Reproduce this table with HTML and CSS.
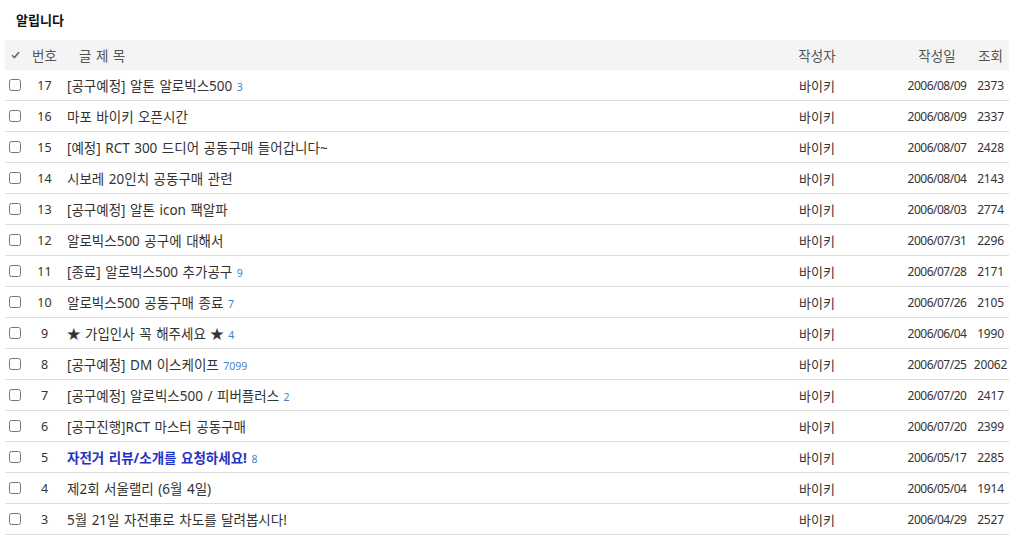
FILE: index.html
```html
<!DOCTYPE html>
<html lang="ko">
<head>
<meta charset="utf-8">
<title>알립니다</title>
<link rel="stylesheet" href="styles.css">
</head>
<body>
<div class="board">
  <h2 class="board-title">알립니다</h2>
  <table class="list">
    <colgroup>
      <col class="c-check"><col class="c-num"><col class="c-subject"><col class="c-author"><col class="c-date"><col class="c-hit">
    </colgroup>
    <thead>
      <tr>
        <th class="check"><svg class="tick" width="9" height="8" viewBox="0 0 9 8"><polyline points="1,4.2 3.4,6.6 8,1.2" fill="none" stroke="#666" stroke-width="1.6"/></svg></th>
        <th class="num">번호</th>
        <th class="subject"><span class="subject-head">글 제 목</span></th>
        <th class="author">작성자</th>
        <th class="date">작성일</th>
        <th class="hit">조회</th>
      </tr>
    </thead>
    <tbody>
      <tr><td class="check"><input type="checkbox"></td><td class="num">17</td><td class="subject">[공구예정] 알톤 알로빅스500 <span class="cmt">3</span></td><td class="author">바이키</td><td class="date">2006/08/09</td><td class="hit">2373</td></tr>
      <tr><td class="check"><input type="checkbox"></td><td class="num">16</td><td class="subject">마포 바이키 오픈시간</td><td class="author">바이키</td><td class="date">2006/08/09</td><td class="hit">2337</td></tr>
      <tr><td class="check"><input type="checkbox"></td><td class="num">15</td><td class="subject">[예정] RCT 300 드디어 공동구매 들어갑니다~</td><td class="author">바이키</td><td class="date">2006/08/07</td><td class="hit">2428</td></tr>
      <tr><td class="check"><input type="checkbox"></td><td class="num">14</td><td class="subject">시보레 20인치 공동구매 관련</td><td class="author">바이키</td><td class="date">2006/08/04</td><td class="hit">2143</td></tr>
      <tr><td class="check"><input type="checkbox"></td><td class="num">13</td><td class="subject">[공구예정] 알톤 icon 팩알파</td><td class="author">바이키</td><td class="date">2006/08/03</td><td class="hit">2774</td></tr>
      <tr><td class="check"><input type="checkbox"></td><td class="num">12</td><td class="subject">알로빅스500 공구에 대해서</td><td class="author">바이키</td><td class="date">2006/07/31</td><td class="hit">2296</td></tr>
      <tr><td class="check"><input type="checkbox"></td><td class="num">11</td><td class="subject">[종료] 알로빅스500 추가공구 <span class="cmt">9</span></td><td class="author">바이키</td><td class="date">2006/07/28</td><td class="hit">2171</td></tr>
      <tr><td class="check"><input type="checkbox"></td><td class="num">10</td><td class="subject">알로빅스500 공동구매 종료 <span class="cmt">7</span></td><td class="author">바이키</td><td class="date">2006/07/26</td><td class="hit">2105</td></tr>
      <tr><td class="check"><input type="checkbox"></td><td class="num">9</td><td class="subject">★ 가입인사 꼭 해주세요 ★ <span class="cmt">4</span></td><td class="author">바이키</td><td class="date">2006/06/04</td><td class="hit">1990</td></tr>
      <tr><td class="check"><input type="checkbox"></td><td class="num">8</td><td class="subject">[공구예정] DM 이스케이프 <span class="cmt">7099</span></td><td class="author">바이키</td><td class="date">2006/07/25</td><td class="hit">20062</td></tr>
      <tr><td class="check"><input type="checkbox"></td><td class="num">7</td><td class="subject">[공구예정] 알로빅스500 / 피버플러스 <span class="cmt">2</span></td><td class="author">바이키</td><td class="date">2006/07/20</td><td class="hit">2417</td></tr>
      <tr><td class="check"><input type="checkbox"></td><td class="num">6</td><td class="subject">[공구진행]RCT 마스터 공동구매</td><td class="author">바이키</td><td class="date">2006/07/20</td><td class="hit">2399</td></tr>
      <tr><td class="check"><input type="checkbox"></td><td class="num">5</td><td class="subject"><span class="strong">자전거 리뷰/소개를 요청하세요!</span> <span class="cmt">8</span></td><td class="author">바이키</td><td class="date">2006/05/17</td><td class="hit">2285</td></tr>
      <tr><td class="check"><input type="checkbox"></td><td class="num">4</td><td class="subject">제2회 서울랠리 (6월 4일)</td><td class="author">바이키</td><td class="date">2006/05/04</td><td class="hit">1914</td></tr>
      <tr><td class="check"><input type="checkbox"></td><td class="num">3</td><td class="subject">5월 21일 자전車로 차도를 달려봅시다!</td><td class="author">바이키</td><td class="date">2006/04/29</td><td class="hit">2527</td></tr>
    </tbody>
  </table>
</div>
</body>
</html>
```

FILE: styles.css
```css
html, body {
  margin: 0;
  padding: 0;
  background: #fff;
}

body {
  font-family: "Noto Sans", "Noto Sans CJK KR", sans-serif;
  font-size: 13.5px;
  color: #333;
}

.board {
  padding: 0 17px 0 5px;
}

.board-title {
  margin: 0;
  height: 40px;
  line-height: 40px;
  padding-left: 11px;
  font-size: 13px;
  font-weight: bold;
  color: #111;
}

.list {
  width: 1004px;
  border-collapse: collapse;
  table-layout: fixed;
}

.c-check { width: 21px; }
.c-num { width: 37px; }
.c-author { width: 170px; }
.c-date { width: 70px; }
.c-hit { width: 37px; }

.list th {
  height: 30px;
  padding: 0;
  background: #f4f4f4;
  font-weight: normal;
  color: #555;
  text-align: center;
  white-space: nowrap;
}

.list td {
  height: 30px;
  padding: 0;
  border-bottom: 1px solid #dedede;
  text-align: center;
  white-space: nowrap;
}

.list .subject {
  text-align: left;
  padding-left: 4px;
  word-spacing: 1px;
}

.subject-head {
  padding-left: 12px;
}

.tick {
  display: block;
  margin-left: 6px;
}

.check input {
  display: block;
  width: 12px;
  height: 12px;
  margin: 0 0 0 4px;
}

.list td.author {
  font-size: 13px;
}

.list td.num,
.list td.date,
.list td.hit {
  font-size: 12px;
}

.list td.num {
  font-size: 12.5px;
}

.list td.date {
  letter-spacing: -0.5px;
}

.list td.hit {
  letter-spacing: -0.2px;
}

.cmt {
  font-size: 10.5px;
  color: #4a7fc7;
}

.strong {
  font-weight: bold;
  color: #2632c4;
}
```
